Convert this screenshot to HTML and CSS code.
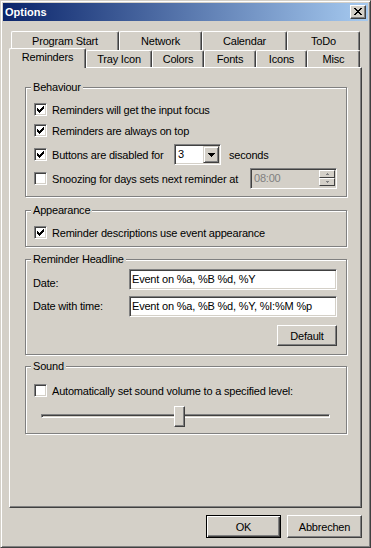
FILE: index.html
```html
<!DOCTYPE html>
<html>
<head>
<meta charset="utf-8">
<title>Options</title>
<link rel="stylesheet" href="styles.css">
</head>
<body>
<div class="window">
  <div class="titlebar">
    <span class="title">Options</span>
    <span class="closebtn"><svg width="8" height="7" viewBox="0 0 8 7" shape-rendering="crispEdges"><path fill="#000" d="M0 0h2v1H0zM6 0h2v1H6zM1 1h2v1H1zM5 1h2v1H5zM2 2h4v1H2zM3 3h2v1H3zM2 4h4v1H2zM1 5h2v1H1zM5 5h2v1H5zM0 6h2v1H0zM6 6h2v1H6z"/></svg></span>
  </div>

  <div class="tabctl">
    <div class="tabrow back">
      <div class="tab w-prog">Program Start</div>
      <div class="tab w-net">Network</div>
      <div class="tab w-cal">Calendar</div>
      <div class="tab w-todo">ToDo</div>
    </div>
    <div class="tabrow front">
      <div class="tab sel w-rem">Reminders</div>
      <div class="tab w-tray">Tray Icon</div>
      <div class="tab w-colors">Colors</div>
      <div class="tab w-fonts">Fonts</div>
      <div class="tab w-icons">Icons</div>
      <div class="tab w-misc">Misc</div>
    </div>

    <div class="page">
      <div class="group g-behaviour">
        <span class="legend">Behaviour</span>
        <div class="row">
          <span class="cb"><svg width="7" height="7" viewBox="0 0 7 7" shape-rendering="crispEdges"><path fill="#000" d="M0 2h1v3H0zM1 3h1v3H1zM2 4h1v3H2zM3 3h1v3H3zM4 2h1v3H4zM5 1h1v3H5zM6 0h1v3H6z"/></svg></span>
          <span class="lbl">Reminders will get the input focus</span>
        </div>
        <div class="row">
          <span class="cb"><svg width="7" height="7" viewBox="0 0 7 7" shape-rendering="crispEdges"><path fill="#000" d="M0 2h1v3H0zM1 3h1v3H1zM2 4h1v3H2zM3 3h1v3H3zM4 2h1v3H4zM5 1h1v3H5zM6 0h1v3H6z"/></svg></span>
          <span class="lbl">Reminders are always on top</span>
        </div>
        <div class="row tall">
          <span class="cb"><svg width="7" height="7" viewBox="0 0 7 7" shape-rendering="crispEdges"><path fill="#000" d="M0 2h1v3H0zM1 3h1v3H1zM2 4h1v3H2zM3 3h1v3H3zM4 2h1v3H4zM5 1h1v3H5zM6 0h1v3H6z"/></svg></span>
          <span class="lbl lbl-disabled-for">Buttons are disabled for</span>
          <span class="combo">
            <span class="combo-text">3</span>
            <span class="combo-btn"><svg width="7" height="4" viewBox="0 0 7 4" shape-rendering="crispEdges"><path fill="#000" d="M0 0h7v1H0zM1 1h5v1H1zM2 2h3v1H2zM3 3h1v1H3z"/></svg></span>
          </span>
          <span class="lbl-seconds">seconds</span>
        </div>
        <div class="row">
          <span class="cb"></span>
          <span class="lbl lbl-snooze">Snoozing for days sets next reminder at</span>
          <span class="spin">
            <span class="spin-text">08:00</span>
            <span class="spin-btns">
              <span class="spin-btn"><svg width="3" height="2" viewBox="0 0 3 2" shape-rendering="crispEdges"><path fill="#808080" d="M1 0h1v1H1zM0 1h3v1H0z"/></svg></span>
              <span class="spin-btn"><svg width="3" height="2" viewBox="0 0 3 2" shape-rendering="crispEdges"><path fill="#808080" d="M0 0h3v1H0zM1 1h1v1H1z"/></svg></span>
            </span>
          </span>
        </div>
      </div>

      <div class="group g-appearance">
        <span class="legend">Appearance</span>
        <div class="row">
          <span class="cb"><svg width="7" height="7" viewBox="0 0 7 7" shape-rendering="crispEdges"><path fill="#000" d="M0 2h1v3H0zM1 3h1v3H1zM2 4h1v3H2zM3 3h1v3H3zM4 2h1v3H4zM5 1h1v3H5zM6 0h1v3H6z"/></svg></span>
          <span class="lbl">Reminder descriptions use event appearance</span>
        </div>
      </div>

      <div class="group g-headline">
        <span class="legend">Reminder Headline</span>
        <div class="hl-row">
          <span class="hl-label low">Date:</span>
          <span class="edit">Event on %a, %B %d, %Y</span>
        </div>
        <div class="hl-row">
          <span class="hl-label">Date with time:</span>
          <span class="edit">Event on %a, %B %d, %Y, %I:%M %p</span>
        </div>
        <div class="hl-actions">
          <button class="btn btn-default-small">Default</button>
        </div>
      </div>

      <div class="group g-sound">
        <span class="legend">Sound</span>
        <div class="row">
          <span class="cb"></span>
          <span class="lbl">Automatically set sound volume to a specified level:</span>
        </div>
        <div class="slider">
          <div class="track"></div>
          <div class="thumb"></div>
        </div>
      </div>
    </div>
  </div>

  <div class="footer">
    <button class="btn btn-dlg btn-primary">OK</button>
    <button class="btn btn-dlg">Abbrechen</button>
  </div>
</div>
</body>
</html>
```

FILE: styles.css
```css
* { box-sizing: border-box; }
html, body { margin: 0; padding: 0; }
body {
  background: #D4D0C8;
  font-family: "Liberation Sans", Arial, sans-serif;
  font-size: 11px;
  letter-spacing: -0.2px;
  color: #000;
}

.window {
  width: 371px;
  height: 548px;
  background: #D4D0C8;
  border: 1px solid;
  border-color: #D4D0C8 #404040 #404040 #D4D0C8;
  box-shadow: inset 1px 1px 0 #fff, inset -1px -1px 0 #808080;
  padding: 2px;
  display: flex;
  flex-direction: column;
}

.titlebar {
  height: 18px;
  flex: none;
  background: linear-gradient(to right, #0A246A, #A6CAF0);
  display: flex;
  align-items: center;
  justify-content: space-between;
  padding-left: 2px;
}
.title { color: #fff; font-weight: bold; line-height: 18px; letter-spacing: 0; }
.closebtn {
  width: 16px;
  height: 14px;
  margin-right: 2px;
  background: #D4D0C8;
  border: 1px solid;
  border-color: #fff #404040 #404040 #fff;
  box-shadow: inset -1px -1px 0 #808080;
  padding: 2px 0 0 3px;
}
.closebtn svg { display: block; }

/* tabs */
.tabctl { margin: 10px 6px 0 6px; }
.tabrow { display: flex; }
.tabrow.back { margin-left: 2px; height: 19px; }
.tabrow.front { height: 17px; }
.tab {
  flex: none;
  background: #D4D0C8;
  border-left: 1px solid #fff;
  border-top: 1px solid #fff;
  border-right: 1px solid #404040;
  box-shadow: inset -1px 0 0 #808080;
  border-radius: 2px 2px 0 0;
  text-align: center;
  white-space: nowrap;
}
.back .tab { height: 19px; line-height: 18px; }
.front .tab { height: 17px; line-height: 16px; }
.front .tab.sel {
  height: 20px;
  margin-top: -2px;
  position: relative;
  z-index: 1;
}
.w-prog { width: 108px; }
.w-net { width: 83px; }
.w-cal { width: 85px; }
.w-todo { width: 73px; }
.w-rem { width: 77px; }
.w-tray { width: 66px; }
.w-colors { width: 52px; }
.w-fonts { width: 52px; }
.w-icons { width: 51px; }
.w-misc { width: 53px; }

.page {
  width: 353px;
  height: 441px;
  border: 1px solid;
  border-color: #fff #404040 #404040 #fff;
  box-shadow: inset -1px -1px 0 #808080;
  padding: 19px 0 0 15px;
}

/* group boxes */
.group {
  position: relative;
  width: 322px;
  border: 1px solid #808080;
  box-shadow: 1px 1px 0 #fff, inset 1px 1px 0 #fff;
}
.legend {
  position: absolute;
  top: -7px;
  left: 5px;
  padding: 0 2px;
  background: #D4D0C8;
  line-height: 13px;
  white-space: nowrap;
}
.g-behaviour { padding: 11px 0 7px 8px; }
.g-appearance { margin-top: 13px; padding: 11px 0 3px 8px; }
.g-headline { margin-top: 12px; padding: 9px 9px 8px 7px; }
.g-sound { margin-top: 11px; padding: 13px 0 6px 8px; }

.row { display: flex; align-items: center; height: 21px; }
.row.tall { height: 27px; }

.cb {
  flex: none;
  width: 13px;
  height: 13px;
  border: 1px solid;
  border-color: #808080 #fff #fff #808080;
  box-shadow: inset 1px 1px 0 #404040, inset -1px -1px 0 #D4D0C8;
  background: #fff;
}
.cb svg { display: block; margin: 2px 0 0 2px; }
.lbl { margin-left: 5px; white-space: nowrap; }
.lbl-disabled-for { width: 122px; }
.lbl-snooze { width: 198px; }
.lbl-seconds { margin-left: 8px; }

.combo {
  flex: none;
  width: 47px;
  height: 21px;
  border: 1px solid;
  border-color: #808080 #fff #fff #808080;
  box-shadow: inset 1px 1px 0 #404040, inset -1px -1px 0 #D4D0C8;
  background: #fff;
  display: flex;
  padding: 1px;
}
.combo-text { flex: 1; padding-left: 2px; line-height: 17px; }
.combo-btn {
  width: 16px;
  height: 17px;
  background: #D4D0C8;
  border: 1px solid;
  border-color: #D4D0C8 #404040 #404040 #D4D0C8;
  box-shadow: inset 1px 1px 0 #fff, inset -1px -1px 0 #808080;
  display: flex;
  align-items: center;
  justify-content: center;
}
.combo-btn svg { display: block; }

.spin {
  flex: none;
  width: 87px;
  height: 21px;
  border: 1px solid;
  border-color: #808080 #fff #fff #808080;
  box-shadow: inset 1px 1px 0 #404040, inset -1px -1px 0 #D4D0C8;
  background: #D4D0C8;
  display: flex;
  padding: 1px;
}
.spin-text { flex: 1; color: #808080; padding-left: 2px; line-height: 17px; }
.spin-btns { width: 16px; display: flex; flex-direction: column; }
.spin-btn {
  height: 8px;
  background: #D4D0C8;
  border: 1px solid;
  border-color: #fff #404040 #404040 #fff;
  display: flex;
  align-items: center;
  justify-content: center;
}
.spin-btn svg { display: block; }

/* headline */
.hl-row { display: flex; height: 21px; }
.hl-row + .hl-row { margin-top: 6px; }
.hl-label { width: 96px; flex: none; align-self: center; line-height: 13px; white-space: nowrap; }
.hl-label.low { align-self: flex-end; }
.edit {
  width: 208px;
  height: 21px;
  border: 1px solid;
  border-color: #808080 #fff #fff #808080;
  box-shadow: inset 1px 1px 0 #404040, inset -1px -1px 0 #D4D0C8;
  background: #fff;
  padding: 1px 1px 1px 2px;
  line-height: 17px;
  white-space: nowrap;
  overflow: hidden;
}
.hl-actions { display: flex; justify-content: flex-end; margin-top: 8px; }

/* buttons */
.btn {
  font: inherit;
  letter-spacing: inherit;
  color: #000;
  margin: 0;
  padding: 0;
  background: #D4D0C8;
  border: 1px solid;
  border-color: #fff #404040 #404040 #fff;
  box-shadow: inset -1px -1px 0 #808080;
  border-radius: 0;
}
.btn-default-small { width: 60px; height: 21px; }
.btn-dlg { width: 75px; height: 23px; }
.btn-primary {
  border: 1px solid #000;
  box-shadow: inset 1px 1px 0 #fff, inset -1px -1px 0 #404040, inset -2px -2px 0 #808080;
}

/* slider */
.slider {
  position: relative;
  margin: 5px 0 0 7px;
  width: 289px;
  height: 21px;
  padding-top: 8px;
}
.track {
  height: 4px;
  border: 1px solid;
  border-color: #808080 #fff #fff #808080;
  box-shadow: inset 1px 1px 0 #404040;
  background: #D4D0C8;
}
.thumb {
  position: absolute;
  left: 133px;
  top: 0;
  width: 11px;
  height: 21px;
  background: #D4D0C8;
  border: 1px solid;
  border-color: #fff #404040 #404040 #fff;
  box-shadow: inset -1px -1px 0 #808080;
}

.footer {
  display: flex;
  justify-content: flex-end;
  gap: 6px;
  margin: 7px 6px 0 0;
}
```
